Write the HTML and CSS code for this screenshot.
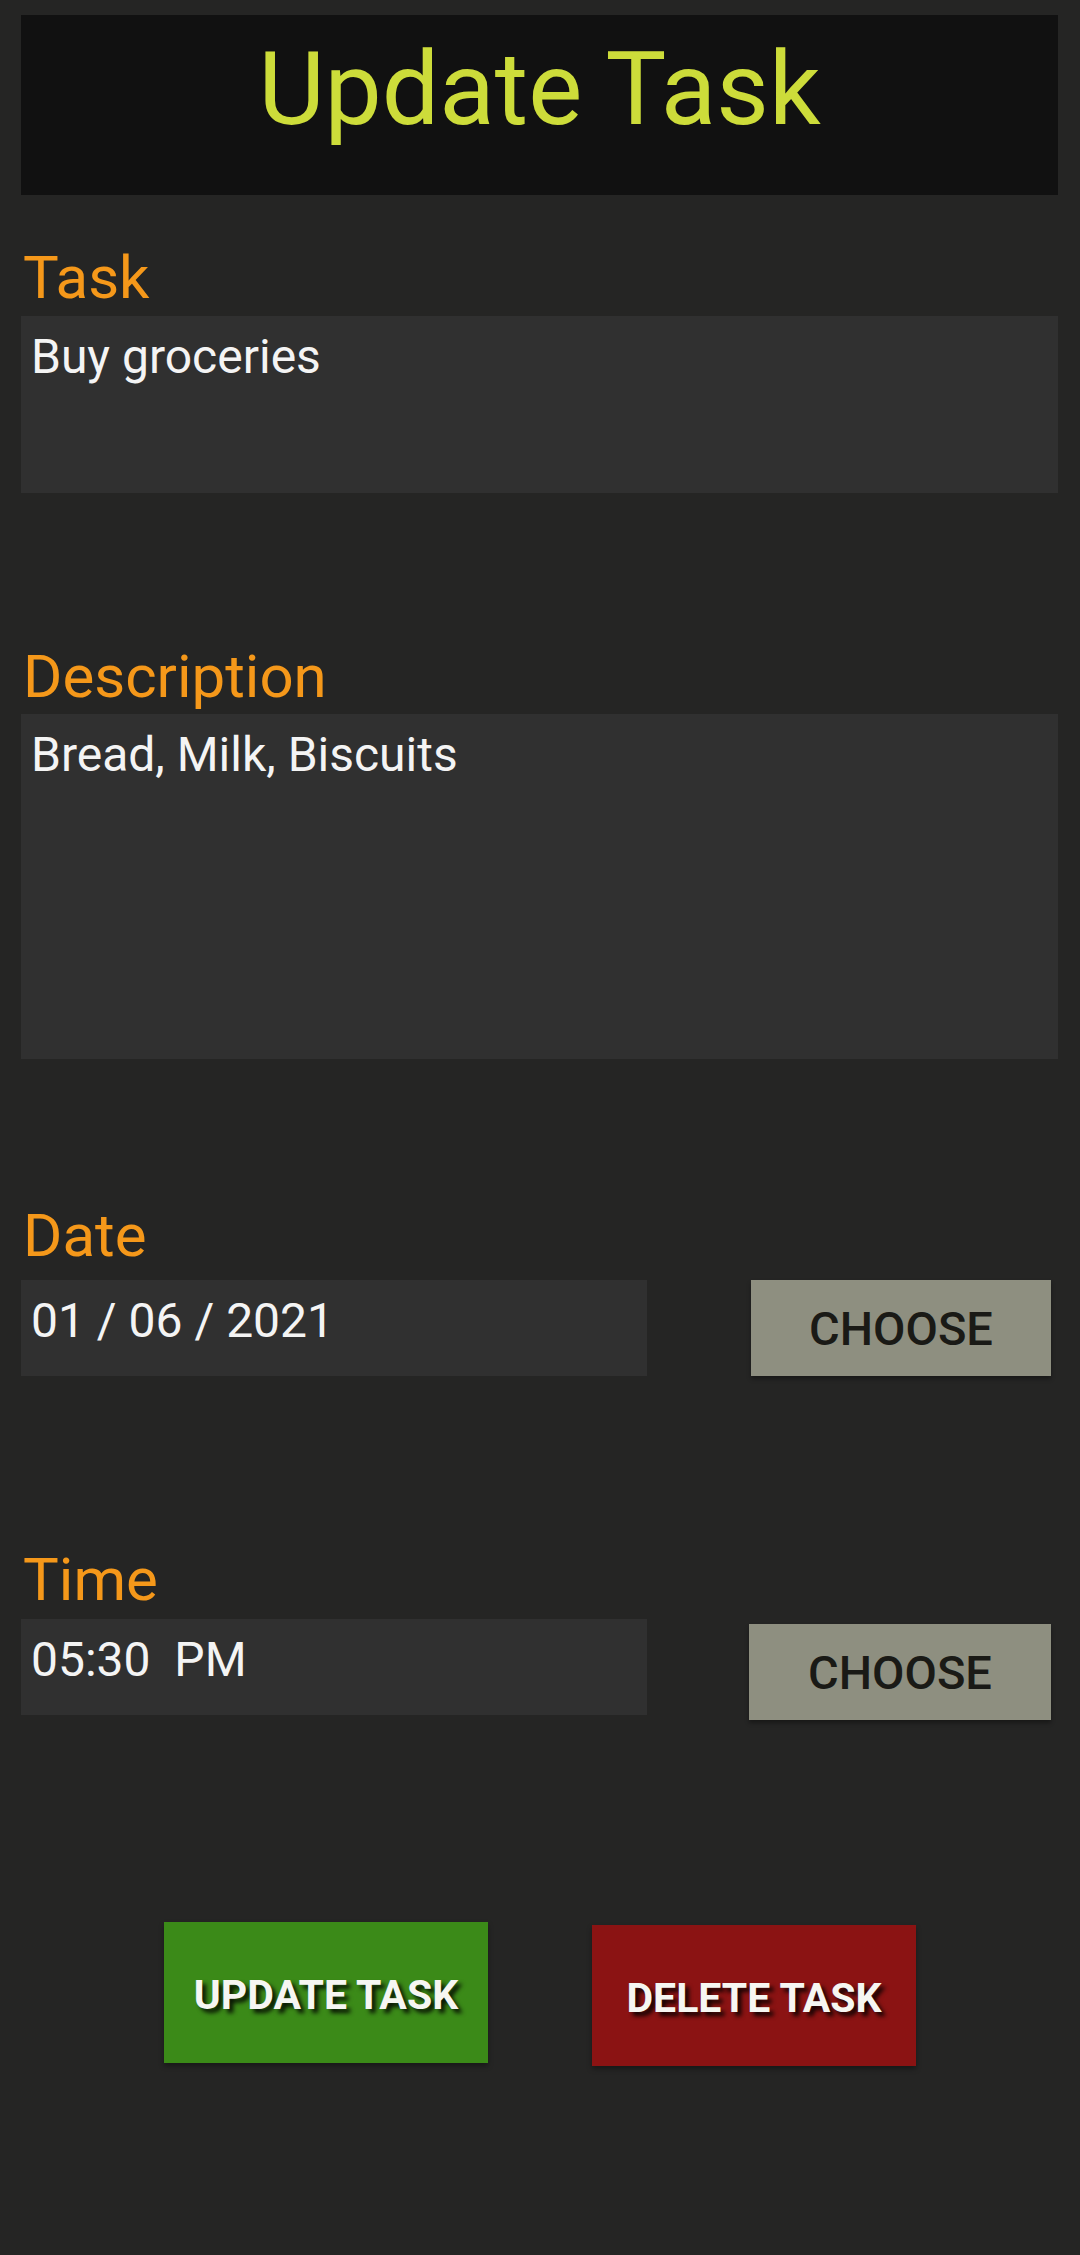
FILE: index.html
```html
<!DOCTYPE html>
<html lang="en">
<head>
<meta charset="utf-8">
<title>Update Task</title>
<link rel="stylesheet" href="styles.css">
</head>
<body>
<div class="screen">
  <header class="header">
    <h1 class="title">Update Task</h1>
  </header>

  <section class="field field-task">
    <div class="label">Task</div>
    <div class="box box-task">Buy groceries</div>
  </section>

  <section class="field field-desc">
    <div class="label">Description</div>
    <div class="box box-desc">Bread, Milk, Biscuits</div>
  </section>

  <section class="field field-date">
    <div class="label label-date">Date</div>
    <div class="row">
      <div class="box box-short">01 / 06 / 2021</div>
      <div class="choose">CHOOSE</div>
    </div>
  </section>

  <section class="field field-time">
    <div class="label label-time">Time</div>
    <div class="row">
      <div class="box box-short">05:30&nbsp; PM</div>
      <div class="choose choose-time">CHOOSE</div>
    </div>
  </section>

  <div class="actions">
    <div class="action action-update">UPDATE TASK</div>
    <div class="action action-delete">DELETE TASK</div>
  </div>
</div>
</body>
</html>
```

FILE: styles.css
```css
* { box-sizing: border-box; }
html, body {
  margin: 0;
  padding: 0;
  background: #252524;
}
body {
  font-family: Roboto, "Noto Sans", "Liberation Sans", sans-serif;
  width: 1080px;
  height: 2255px;
  overflow: hidden;
}
.screen {
  padding: 15px 22px 0 21px;
}
.header {
  background: #111111;
  height: 180px;
  padding-top: 24px;
  text-align: center;
}
.title {
  margin: 0;
  font-weight: 400;
  font-size: 102px;
  line-height: 100px;
  color: #cddc3a;
}
.label {
  font-size: 60px;
  line-height: 70px;
  color: #f5981a;
  height: 70px;
  padding-left: 2px;
}
.field-task { margin-top: 48px; }
.field-task .label { margin-bottom: 3px; }
.field-desc { margin-top: 149px; }
.field-desc .label { margin-bottom: 2px; }
.field-date { margin-top: 142px; }
.label-date { margin-bottom: 9px; }
.field-time { margin-top: 169px; }
.label-time { margin-bottom: 4px; }

.box {
  background: #303030;
  color: #f4f4f4;
  font-size: 48px;
  line-height: 56px;
  padding: 13px 10px 0 10px;
}
.box-task { height: 177px; }
.box-desc { height: 345px; }
.row {
  display: flex;
  justify-content: space-between;
  align-items: flex-start;
  padding-right: 7px;
}
.box-short {
  width: 626px;
  height: 96px;
}
.choose {
  width: 300px;
  height: 96px;
  background: #8e8f80;
  color: #1a1a16;
  font-weight: 500;
  font-size: 47px;
  display: flex;
  align-items: center;
  justify-content: center;
  box-shadow: 0 3px 4px rgba(0,0,0,0.35);
}
.choose-time {
  width: 302px;
  margin-top: 5px;
}
.actions {
  display: flex;
  align-items: flex-start;
  margin-top: 202px;
  padding-left: 143px;
  gap: 104px;
}
.action {
  width: 324px;
  height: 141px;
  display: flex;
  align-items: center;
  justify-content: center;
  color: #f6f6f2;
  font-weight: 700;
  font-size: 41px;
  padding-top: 4px;
  text-shadow: 4px 4px 4px rgba(0,0,0,0.85);
  box-shadow: 0 3px 5px rgba(0,0,0,0.35);
}
.action-update { background: #3b8a18; }
.action-delete { background: #8b1313; margin-top: 3px; }
```
